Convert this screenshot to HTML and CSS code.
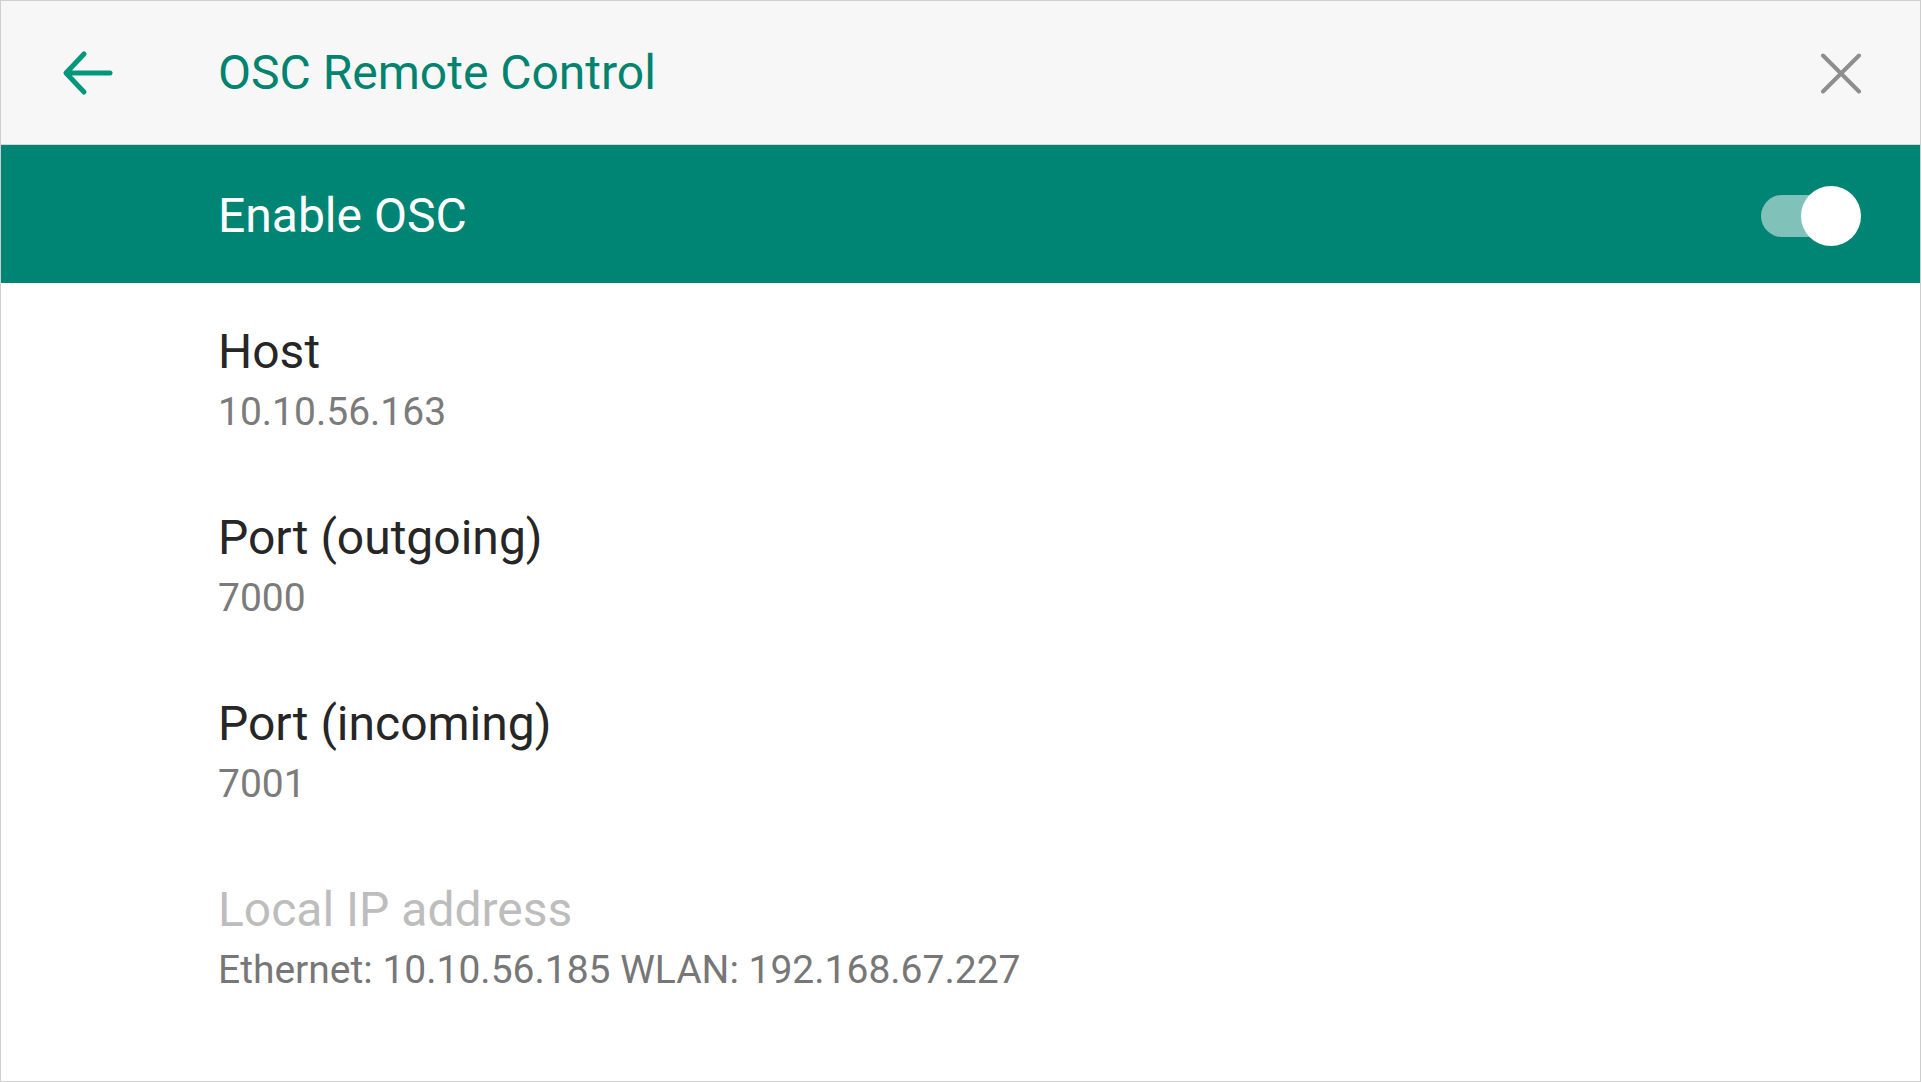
FILE: index.html
```html
<!DOCTYPE html>
<html lang="en">
<head>
<meta charset="utf-8">
<title>OSC Remote Control</title>
<link rel="stylesheet" href="styles.css">
</head>
<body>
<div class="frame">
  <header class="appbar">
    <button class="icon-btn back" aria-label="Back">
      <svg width="52" height="46" viewBox="0 0 52 46"><path d="M49 23H6M23 4L5 23L23 42" fill="none" stroke="#00977c" stroke-width="5" stroke-linecap="round" stroke-linejoin="round"/></svg>
    </button>
    <h1 class="title">OSC Remote Control</h1>
    <button class="icon-btn close" aria-label="Close">
      <svg width="42" height="41" viewBox="0 0 42 41"><path d="M3 2.5L39 38.5M39 2.5L3 38.5" fill="none" stroke="#8e8e8e" stroke-width="4" stroke-linecap="round"/></svg>
    </button>
  </header>
  <div class="master">
    <span class="master-label">Enable OSC</span>
    <span class="switch"><span class="track"></span><span class="thumb"></span></span>
  </div>
  <ul class="prefs">
    <li class="pref">
      <div class="pref-title">Host</div>
      <div class="pref-summary">10.10.56.163</div>
    </li>
    <li class="pref">
      <div class="pref-title">Port (outgoing)</div>
      <div class="pref-summary">7000</div>
    </li>
    <li class="pref">
      <div class="pref-title">Port (incoming)</div>
      <div class="pref-summary">7001</div>
    </li>
    <li class="pref disabled">
      <div class="pref-title">Local IP address</div>
      <div class="pref-summary">Ethernet: 10.10.56.185 WLAN: 192.168.67.227</div>
    </li>
  </ul>
</div>
</body>
</html>
```

FILE: styles.css
```css
* { box-sizing: border-box; }
html, body { margin: 0; padding: 0; background: #ffffff; }
body { font-family: Roboto, "Noto Sans", sans-serif; }

.frame {
  width: 1921px;
  height: 1082px;
  border: 1px solid #cfcfcf;
  background: #ffffff;
  display: flex;
  flex-direction: column;
  overflow: hidden;
}

.appbar {
  height: 144px;
  flex: 0 0 144px;
  background: #f7f7f7;
  border-bottom: 1px solid #d6d6d6;
  display: flex;
  align-items: center;
}

.icon-btn {
  border: 0;
  background: transparent;
  padding: 0;
  margin: 0;
  display: flex;
  align-items: center;
  justify-content: center;
  cursor: pointer;
}
.icon-btn svg { display: block; }
.back { width: 52px; height: 46px; margin-left: 60px; }
.close { width: 42px; height: 41px; margin-left: auto; margin-right: 58px; margin-top: 1px; }

.title {
  margin: 0 0 0 105px;
  font-weight: 400;
  font-size: 48px;
  line-height: 142px;
  color: #00836f;
}

.master {
  height: 138px;
  flex: 0 0 138px;
  background: #008575;
  display: flex;
  align-items: center;
  padding-left: 217px;
  padding-right: 59px;
}
.master-label {
  font-size: 48px;
  color: #ffffff;
  line-height: 56px;
  padding-top: 3px;
}
.switch {
  margin-left: auto;
  position: relative;
  width: 102px;
  height: 60px;
  display: block;
  margin-top: 3px;
}
.track {
  position: absolute;
  left: 2px;
  top: 9px;
  width: 98px;
  height: 42px;
  border-radius: 21px;
  background: #80c2ba;
}
.thumb {
  position: absolute;
  right: 0;
  top: 0;
  width: 60px;
  height: 60px;
  border-radius: 50%;
  background: #ffffff;
}

.prefs {
  list-style: none;
  margin: 0;
  padding: 0;
}
.pref {
  height: 186px;
  padding: 41px 0 0 217px;
}
.pref-title {
  font-size: 48px;
  line-height: 56px;
  color: #262626;
}
.pref-summary {
  font-size: 39px;
  line-height: 60px;
  margin-top: 2px;
  color: #7b7b7b;
}
.pref.disabled .pref-title { color: #bdbdbd; }
.pref.disabled .pref-summary { color: #777777; }
```
